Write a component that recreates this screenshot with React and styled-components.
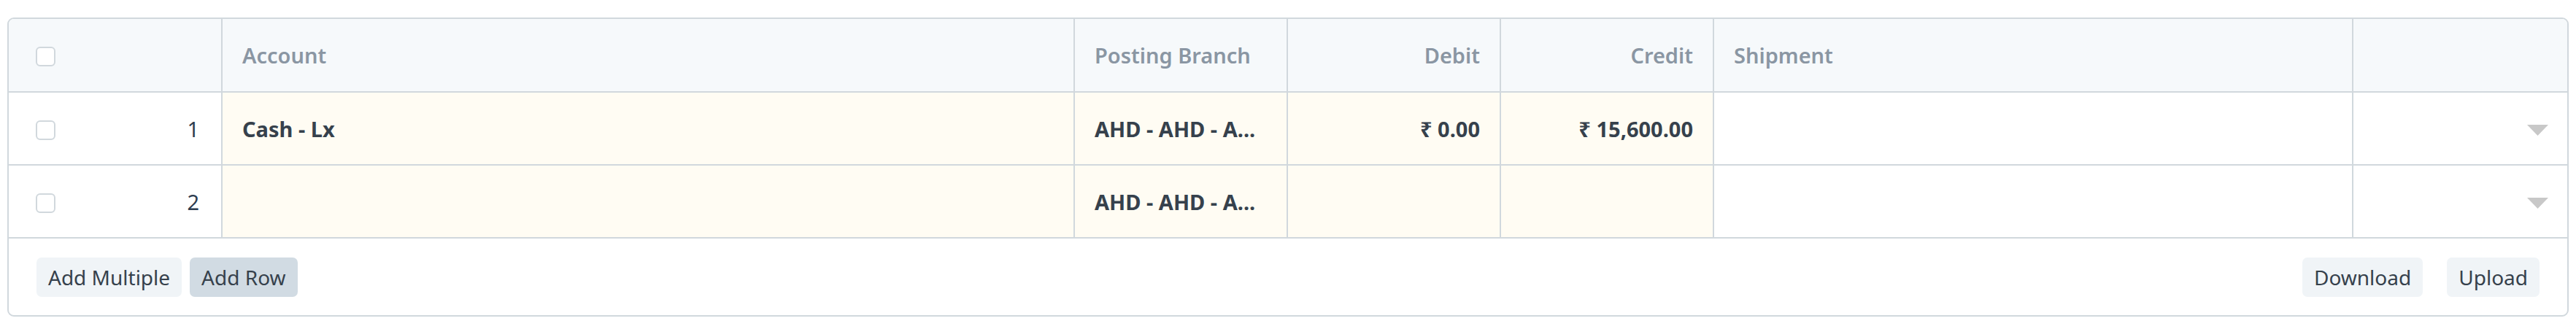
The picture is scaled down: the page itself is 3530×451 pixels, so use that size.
import React from 'react'
import styled, { createGlobalStyle } from 'styled-components'

const GlobalStyle = createGlobalStyle`
  body {
    margin: 0;
    background: #fff;
    font-family: 'Noto Sans', 'Open Sans', sans-serif;
    color: #36414c;
  }
`

const columns = [
  { key: 'idx', width: '293px' },
  { key: 'account', label: 'Account', width: '1168px' },
  { key: 'branch', label: 'Posting Branch', width: '292px' },
  { key: 'debit', label: 'Debit', width: '292px', right: true },
  { key: 'credit', label: 'Credit', width: '292px', right: true },
  { key: 'shipment', label: 'Shipment', width: '876px' },
  { key: 'edit', width: '1fr' },
]

const rows = [
  { idx: 1, account: 'Cash - Lx', branch: 'AHD - AHD - A...', debit: '₹ 0.00', credit: '₹ 15,600.00' },
  { idx: 2, account: '', branch: 'AHD - AHD - A...', debit: '', credit: '' },
]

const Page = styled.div`
  padding: 24px 10px 0 10px;
`

const Grid = styled.div`
  border: 2px solid #d1d8dd;
  border-radius: 9px;
  overflow: hidden;
  background: #fff;
`

const Row = styled.div`
  display: grid;
  grid-template-columns: ${columns.map((c) => c.width).join(' ')};
  height: ${(p) => (p.$head ? '101px' : '100px')};
  border-bottom: 2px solid #d1d8dd;
  box-sizing: border-box;
  background: ${(p) => (p.$head ? '#f6f9fb' : '#fff')};
`

const Cell = styled.div`
  display: flex;
  align-items: center;
  justify-content: ${(p) => (p.$right ? 'flex-end' : 'flex-start')};
  padding: 0 27px;
  min-width: 0;
  border-right: ${(p) => (p.$last ? 'none' : '2px solid #d1d8dd')};
  background: ${(p) => (p.$editable ? '#fffcf3' : 'transparent')};
  font-size: 29px;
`

const HeadLabel = styled.span`
  color: #8a96a3;
  font-weight: 600;
  white-space: nowrap;
`

const Value = styled.span`
  font-weight: 700;
  color: #36414c;
  white-space: nowrap;
`

const IdxCell = styled(Cell)`
  justify-content: space-between;
  padding: 0 30px 0 37px;
`

const Check = styled.span`
  width: 27px;
  height: 27px;
  box-sizing: border-box;
  border: 2px solid #d1d8dd;
  border-radius: 6px;
  background: #fff;
  margin-top: 4px;
`

const Num = styled.span`
  color: #2e3d4f;
  font-size: 29px;
`

const Caret = styled.svg`
  margin-left: auto;
  margin-right: -1px;
  margin-top: 4px;
`

const Footer = styled.div`
  display: flex;
  align-items: center;
  height: 105px;
  padding: 0 38px 0 38px;
  gap: 11px;
`

const Button = styled.button`
  height: 54px;
  padding: 0 16px;
  border: none;
  border-radius: 7px;
  background: ${(p) => (p.$active ? '#d1dbe3' : '#f0f4f7')};
  color: #36414c;
  font-family: inherit;
  font-size: 28px;
  cursor: pointer;
`

const Spacer = styled.div`
  flex: 1;
`

const RightGroup = styled.div`
  display: flex;
  gap: 33px;
`

const App = () => {
  return (
    <>
      <GlobalStyle />
      <Page>
        <Grid>
          <Row $head>
            <IdxCell>
              <Check />
            </IdxCell>
            <Cell>
              <HeadLabel>Account</HeadLabel>
            </Cell>
            <Cell>
              <HeadLabel>Posting Branch</HeadLabel>
            </Cell>
            <Cell $right>
              <HeadLabel>Debit</HeadLabel>
            </Cell>
            <Cell $right>
              <HeadLabel>Credit</HeadLabel>
            </Cell>
            <Cell>
              <HeadLabel>Shipment</HeadLabel>
            </Cell>
            <Cell $last />
          </Row>
          {rows.map((r) => (
            <Row key={r.idx}>
              <IdxCell>
                <Check />
                <Num>{r.idx}</Num>
              </IdxCell>
              <Cell $editable>
                <Value>{r.account}</Value>
              </Cell>
              <Cell $editable>
                <Value>{r.branch}</Value>
              </Cell>
              <Cell $editable $right>
                <Value>{r.debit}</Value>
              </Cell>
              <Cell $editable $right>
                <Value>{r.credit}</Value>
              </Cell>
              <Cell />
              <Cell $last>
                <Caret width="29" height="15" viewBox="0 0 29 15">
                  <polygon points="0,0 29,0 14.5,15" fill="#c8c8c8" />
                </Caret>
              </Cell>
            </Row>
          ))}
          <Footer>
            <Button>Add Multiple</Button>
            <Button $active>Add Row</Button>
            <Spacer />
            <RightGroup>
              <Button>Download</Button>
              <Button>Upload</Button>
            </RightGroup>
          </Footer>
        </Grid>
      </Page>
    </>
  )
}

export default App
